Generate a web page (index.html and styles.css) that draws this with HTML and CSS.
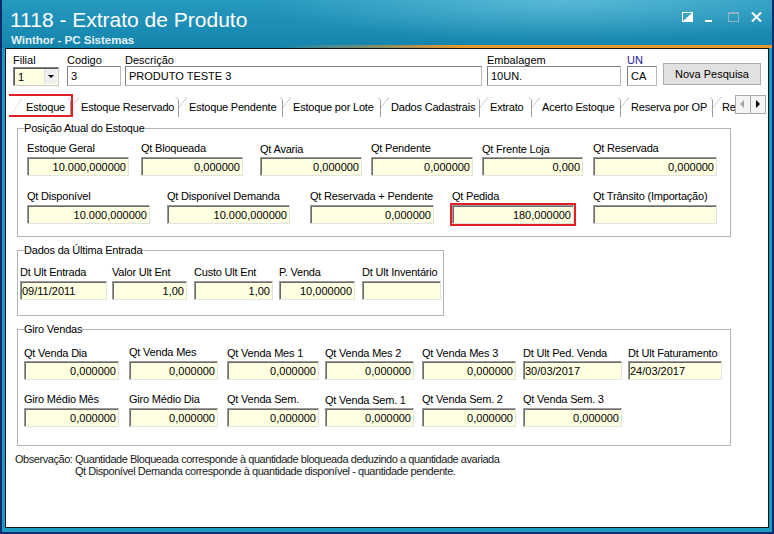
FILE: index.html
```html
<!DOCTYPE html>
<html>
<head>
<meta charset="utf-8">
<title>1118 - Extrato de Produto</title>
<link rel="stylesheet" href="styles.css">
</head>
<body>
<div id="janela">
	<!-- barra de titulo -->
	<div id="titulo">
		<div class="tit-textos">
			<h1>1118 - Extrato de Produto</h1>
			<p>Winthor - PC Sistemas</p>
		</div>
		<div class="tit-botoes">
			<svg width="11" height="10" viewBox="0 0 11 10"><rect x="0.5" y="0.5" width="10" height="9" fill="none" stroke="#fff"/><path d="M10 1 L10 9 L1 9 Z" fill="#fff"/></svg>
			<svg width="7" height="10" viewBox="0 0 7 10"><rect x="0" y="8" width="7" height="2" fill="#fff"/></svg>
			<svg width="11" height="10" viewBox="0 0 11 10"><rect x="0.5" y="0.5" width="10" height="9" fill="none" stroke="#8fb3c2"/><rect x="0" y="0" width="11" height="2" fill="#8fb3c2"/></svg>
			<svg width="11" height="10" viewBox="0 0 11 10"><path d="M1 0.5 L10 9.5 M10 0.5 L1 9.5" stroke="#fff" stroke-width="2"/></svg>
		</div>
	</div>

	<div id="cliente">
		<!-- filtros do produto -->
		<div id="cabecalho">
			<div class="campo w46">
				<label>Filial</label>
				<div class="combo"><span>1</span><b class="combo-btn"></b></div>
			</div>
			<div class="campo w54 ml8">
				<label>Codigo</label>
				<input class="txt" value="3" readonly>
			</div>
			<div class="campo w357 ml4">
				<label>Descrição</label>
				<input class="txt" value="PRODUTO TESTE 3" readonly>
			</div>
			<div class="campo w134 ml5">
				<label>Embalagem</label>
				<input class="txt" value="10UN." readonly>
			</div>
			<div class="campo w30 ml6">
				<label class="azul">UN</label>
				<input class="txt" value="CA" readonly>
			</div>
			<button class="btn-pesquisa">Nova Pesquisa</button>
		</div>

		<!-- abas -->
		<div id="abas">
			<ul class="lista-abas">
				<li class="aba ativa"><span class="aba-bd"><span class="aba-tx">Estoque</span></span></li>
				<li class="aba"><span class="aba-bd"><span class="aba-tx">Estoque Reservado</span></span></li>
				<li class="aba"><span class="aba-bd"><span class="aba-tx">Estoque Pendente</span></span></li>
				<li class="aba"><span class="aba-bd"><span class="aba-tx">Estoque por Lote</span></span></li>
				<li class="aba"><span class="aba-bd"><span class="aba-tx">Dados Cadastrais</span></span></li>
				<li class="aba"><span class="aba-bd"><span class="aba-tx">Extrato</span></span></li>
				<li class="aba"><span class="aba-bd"><span class="aba-tx">Acerto Estoque</span></span></li>
				<li class="aba"><span class="aba-bd"><span class="aba-tx">Reserva por OP</span></span></li>
				<li class="aba"><span class="aba-bd"><span class="aba-tx">Re</span></span></li>
			</ul>
			<div class="rolagem">
				<span class="btn-rol esq"></span><span class="btn-rol dir"></span>
			</div>
		</div>

		<div id="pagina">
			<fieldset class="grupo g-posicao">
				<legend>Posição Atual do Estoque</legend>
				<div class="linha pl9">
					<div class="campo w102"><label>Estoque Geral</label><input class="ed" value="10.000,000000" readonly></div>
					<div class="campo w102 ml12"><label>Qt Bloqueada</label><input class="ed" value="0,000000" readonly></div>
					<div class="campo w102 ml17"><label class="baixo">Qt Avaria</label><input class="ed" value="0,000000" readonly></div>
					<div class="campo w102 ml9"><label>Qt Pendente</label><input class="ed" value="0,000000" readonly></div>
					<div class="campo w101 ml9"><label class="baixo">Qt Frente Loja</label><input class="ed" value="0,000" readonly></div>
					<div class="campo w124 ml10"><label>Qt Reservada</label><input class="ed" value="0,000000" readonly></div>
				</div>
				<div class="linha pl9">
					<div class="campo w123"><label>Qt Disponível</label><input class="ed" value="10.000,000000" readonly></div>
					<div class="campo w123 ml17"><label>Qt Disponível Demanda</label><input class="ed" value="10.000,000000" readonly></div>
					<div class="campo w124 ml20"><label>Qt Reservada + Pendente</label><input class="ed" value="0,000000" readonly></div>
					<div class="campo w122 ml18"><label>Qt Pedida</label><input class="ed destaque" value="180,000000" readonly></div>
					<div class="campo w124 ml19"><label>Qt Trânsito (Importação)</label><input class="ed" value="" readonly></div>
				</div>
			</fieldset>

			<fieldset class="grupo g-entrada">
				<legend>Dados da Última Entrada</legend>
				<div class="linha pl2">
					<div class="campo w87"><label>Dt Ult Entrada</label><input class="ed esq" value="09/11/2011" readonly></div>
					<div class="campo w75 ml5"><label>Valor Ult Ent</label><input class="ed" value="1,00" readonly></div>
					<div class="campo w79 ml7"><label>Custo Ult Ent</label><input class="ed" value="1,00" readonly></div>
					<div class="campo w76 ml6"><label>P. Venda</label><input class="ed" value="10,000000" readonly></div>
					<div class="campo w79 ml7"><label>Dt Ult Inventário</label><input class="ed esq" value="" readonly></div>
				</div>
			</fieldset>

			<fieldset class="grupo g-giro">
				<legend>Giro Vendas</legend>
				<div class="linha pl6">
					<div class="campo w95"><label class="baixo">Qt Venda Dia</label><input class="ed" value="0,000000" readonly></div>
					<div class="campo w89 ml10"><label>Qt Venda Mes</label><input class="ed" value="0,000000" readonly></div>
					<div class="campo w92 ml9"><label class="baixo">Qt Venda Mes 1</label><input class="ed" value="0,000000" readonly></div>
					<div class="campo w89 ml6"><label class="baixo">Qt Venda Mes 2</label><input class="ed" value="0,000000" readonly></div>
					<div class="campo w94 ml8"><label class="baixo">Qt Venda Mes 3</label><input class="ed" value="0,000000" readonly></div>
					<div class="campo w99 ml7"><label class="baixo">Dt Ult Ped. Venda</label><input class="ed esq" value="30/03/2017" readonly></div>
					<div class="campo w94 ml6"><label class="baixo">Dt Ult Faturamento</label><input class="ed esq" value="24/03/2017" readonly></div>
				</div>
				<div class="linha pl6">
					<div class="campo w95"><label>Giro Médio Mês</label><input class="ed" value="0,000000" readonly></div>
					<div class="campo w89 ml10"><label>Giro Médio Dia</label><input class="ed" value="0,000000" readonly></div>
					<div class="campo w92 ml9"><label>Qt Venda Sem.</label><input class="ed" value="0,000000" readonly></div>
					<div class="campo w89 ml6"><label class="baixo">Qt Venda Sem. 1</label><input class="ed" value="0,000000" readonly></div>
					<div class="campo w94 ml8"><label>Qt Venda Sem. 2</label><input class="ed" value="0,000000" readonly></div>
					<div class="campo w99 ml7"><label>Qt Venda Sem. 3</label><input class="ed" value="0,000000" readonly></div>
				</div>
			</fieldset>

			<div class="obs">
				<span class="obs-rot">Observação:</span>
				<div class="obs-txt">
					Quantidade Bloqueada corresponde à quantidade bloqueada deduzindo a quantidade avariada<br>
					Qt Disponível Demanda corresponde à quantidade disponível - quantidade pendente.
				</div>
			</div>
		</div>
	</div>
</div>
</body>
</html>
```

FILE: styles.css
```css
*{
	margin: 0;
	padding: 0;
}
body {
	background-color: #fff;
	font-family: "Liberation Sans", Arial, sans-serif;
	font-size: 11px;
	color: #000;
}

/* moldura da janela */
#janela {
	width: 774px;
	height: 534px;
	box-sizing: border-box;
	border: 2px solid #0c2b6e;
	border-top: 0;
	background-color: #1c9cc3;
	padding: 0 3px 4px;
	display: flex;
	flex-direction: column;
}
#titulo {
	height: 48px;
	flex: none;
	margin: 0 -3px;
	padding: 8px 10px 0 9px;
	box-sizing: border-box;
	display: flex;
	justify-content: space-between;
	align-items: flex-start;
	color: #fff;
	background:
		linear-gradient(to right, rgba(233,151,44,0) 280px, #e9972c 460px) left bottom / 100% 3px no-repeat,
		radial-gradient(ellipse 430px 60px at 560px 0, rgba(150,225,242,.45), rgba(150,225,242,0) 70%),
		linear-gradient(#2699bf, #1484ad);
}
#titulo h1 {
	font-size: 21px;
	line-height: 24px;
	font-weight: normal;
	margin-left: -1px;
}
#titulo p {
	font-size: 11.5px;
	line-height: 14px;
	font-weight: bold;
	color: #e4f2f7;
	margin-top: 1px;
}
.tit-botoes {
	display: flex;
	gap: 12px;
	margin-top: 4px;
}
.tit-botoes svg:nth-child(2) {
	margin-right: 4px;
}
#cliente {
	flex: 1;
	background-color: #fff;
	border: 1px solid #111;
}

/* campos */
.campo {
	flex: none;
}
.campo label {
	display: block;
	height: 15px;
	line-height: 13px;
	white-space: nowrap;
	letter-spacing: -0.2px;
}
.campo label.baixo {
	line-height: 15px;
}
.azul {
	color: #1c1c96;
}
.w30 { width: 30px; }
.w46 { width: 46px; }
.w54 { width: 54px; }
.w75 { width: 75px; }
.w76 { width: 76px; }
.w79 { width: 79px; }
.w87 { width: 87px; }
.w89 { width: 89px; }
.w92 { width: 92px; }
.w94 { width: 94px; }
.w95 { width: 95px; }
.w99 { width: 99px; }
.w101 { width: 101px; }
.w102 { width: 102px; }
.w122 { width: 122px; }
.w123 { width: 123px; }
.w124 { width: 124px; }
.w134 { width: 134px; }
.w357 { width: 357px; }
.ml4 { margin-left: 4px; }
.ml5 { margin-left: 5px; }
.ml6 { margin-left: 6px; }
.ml7 { margin-left: 7px; }
.ml8 { margin-left: 8px; }
.ml9 { margin-left: 9px; }
.ml10 { margin-left: 10px; }
.ml12 { margin-left: 12px; }
.ml17 { margin-left: 17px; }
.ml18 { margin-left: 18px; }
.ml19 { margin-left: 19px; }
.ml20 { margin-left: 20px; }
.pl2 { padding-left: 2px; }
.pl6 { padding-left: 6px; }
.pl9 { padding-left: 9px; }

input {
	display: block;
	width: 100%;
	box-sizing: border-box;
	font: inherit;
	color: #000;
	outline: none;
}

/* cabecalho */
#cabecalho {
	display: flex;
	align-items: flex-start;
	padding: 5px 0 0 7px;
}
#cabecalho .campo label {
	height: 12px;
	line-height: 12px;
	letter-spacing: 0;
}
.txt {
	height: 20px;
	border: 1px solid #7f7f7f;
	border-bottom-color: #b9b9b9;
	border-right-color: #b9b9b9;
	background-color: #fff;
	padding: 0 3px;
}
.combo {
	height: 19px;
	margin-top: 1px;
	box-sizing: border-box;
	border: 1px solid #7f7f7f;
	border-right-color: #c9c9c9;
	border-bottom-color: #c9c9c9;
	box-shadow: inset 1px 1px 0 #5a5a5a;
	background-color: #ffffe1;
	display: flex;
	justify-content: space-between;
	align-items: center;
}
.combo span {
	padding-left: 4px;
}
.combo-btn {
	width: 12px;
	height: 15px;
	margin-right: 1px;
	background-color: #f0f0f0;
	border-left: 1px solid #e2e2e2;
	position: relative;
}
.combo-btn:after {
	content: "";
	position: absolute;
	left: 3px;
	top: 6px;
	border-top: 3px solid #000;
	border-left: 3px solid transparent;
	border-right: 3px solid transparent;
}
.btn-pesquisa {
	width: 98px;
	height: 22px;
	margin: 9px 0 0 6px;
	font: inherit;
	font-size: 11px;
	color: #000;
	background-color: #e1e1e1;
	border: 1px solid #adadad;
}

/* abas */
#abas {
	display: flex;
	height: 23px;
	margin-top: 8px;
	padding-left: 3px;
}
.lista-abas {
	list-style: none;
	display: flex;
	align-items: flex-end;
	width: 726px;
	overflow: hidden;
}
.aba {
	flex: none;
	height: 21px;
	position: relative;
}
.aba-bd {
	display: block;
	height: 21px;
	background-color: #9c9c9c;
	clip-path: polygon(0 10px, 8px 0, calc(100% - 3px) 0, 100% 3px, 100% 100%, 0 100%);
}
.aba-tx {
	display: block;
	height: 16px;
	margin: 1px 1px 0 0;
	padding: 4px 0 0 10px;
	line-height: 13px;
	background-color: #fff;
	white-space: nowrap;
	overflow: hidden;
	letter-spacing: -0.2px;
	clip-path: polygon(0 10.6px, 8.5px 0, calc(100% - 2.5px) 0, 100% 2.5px, 100% 100%, 0 100%);
}
.aba.ativa {
	z-index: 1;
}
.aba.ativa .aba-bd {
	background: linear-gradient(#3a8fd9 0 2px, #9c9c9c 2px);
	clip-path: polygon(0 100%, 13px 0, calc(100% - 3px) 0, 100% 3px, 100% 100%);
}
.aba.ativa .aba-tx {
	height: 16px;
	margin-top: 2px;
	padding: 3px 0 0 17px;
	clip-path: polygon(1.2px 100%, 12.9px 0, calc(100% - 2.5px) 0, 100% 2.5px, 100% 100%);
}
/* marcacao vermelha do print */
.aba.ativa:after {
	content: "";
	position: absolute;
	left: -2px;
	right: -2px;
	top: -2px;
	bottom: 0;
	border: 2px solid #e2202a;
}
.aba:nth-child(1) { width: 62px; }
.aba:nth-child(2) { width: 108px; }
.aba:nth-child(3) { width: 104px; }
.aba:nth-child(4) { width: 98px; }
.aba:nth-child(5) { width: 99px; }
.aba:nth-child(6) { width: 52px; }
.aba:nth-child(7) { width: 89px; }
.aba:nth-child(8) { width: 92px; }
.aba:nth-child(9) { width: 40px; }
.aba:nth-child(9) .aba-tx { padding-left: 9px; }
.rolagem {
	display: flex;
	align-items: flex-start;
	margin-top: 1px;
}
.btn-rol {
	width: 16px;
	height: 19px;
	box-sizing: border-box;
	border: 1px solid #a9a9a9;
	background-color: #f4f4f4;
	position: relative;
}
.btn-rol.dir {
	width: 15px;
	border-left: 0;
}
.btn-rol:after {
	content: "";
	position: absolute;
	top: 4px;
	border-top: 4px solid transparent;
	border-bottom: 4px solid transparent;
}
.btn-rol.esq:after {
	left: 4px;
	border-right: 4px solid #a3a3a3;
}
.btn-rol.dir:after {
	left: 5px;
	border-left: 4px solid #000;
}

/* pagina da aba Estoque */
#pagina {
	padding-left: 11px;
}
fieldset.grupo {
	width: 714px;
	min-width: 0;
	box-sizing: border-box;
	border: 1px solid #b4b4b4;
	padding: 8px 0 12px;
}
fieldset.grupo legend {
	margin-left: 6px;
	line-height: 12px;
	letter-spacing: -0.2px;
}
.g-posicao {
	margin-top: 5px;
}
.g-entrada {
	width: 427px !important;
	margin-top: 7px;
	padding: 10px 0 15px !important;
}
.g-giro {
	margin-top: 7px;
	padding: 11px 0 18px !important;
}
.linha {
	display: flex;
}
.g-posicao .linha + .linha {
	margin-top: 14px;
}
.g-giro .linha + .linha {
	margin-top: 13px;
}
.ed {
	height: 19px;
	border: 1px solid;
	border-color: #9a9a9a #e3e3e3 #e3e3e3 #9a9a9a;
	box-shadow: inset 1px 1px 0 #6b6b6b;
	background-color: #ffffe1;
	padding: 0 2px 0 1px;
	text-align: right;
}
.ed.esq {
	text-align: left;
}
.ed.destaque {
	outline: 2px solid #e2202a;
}

/* observacao */
.obs {
	display: flex;
	margin: 8px 0 0 -2px;
	line-height: 11.5px;
	color: #1a1a1a;
	letter-spacing: -0.45px;
}
.obs-rot {
	width: 60px;
	flex: none;
}
```
